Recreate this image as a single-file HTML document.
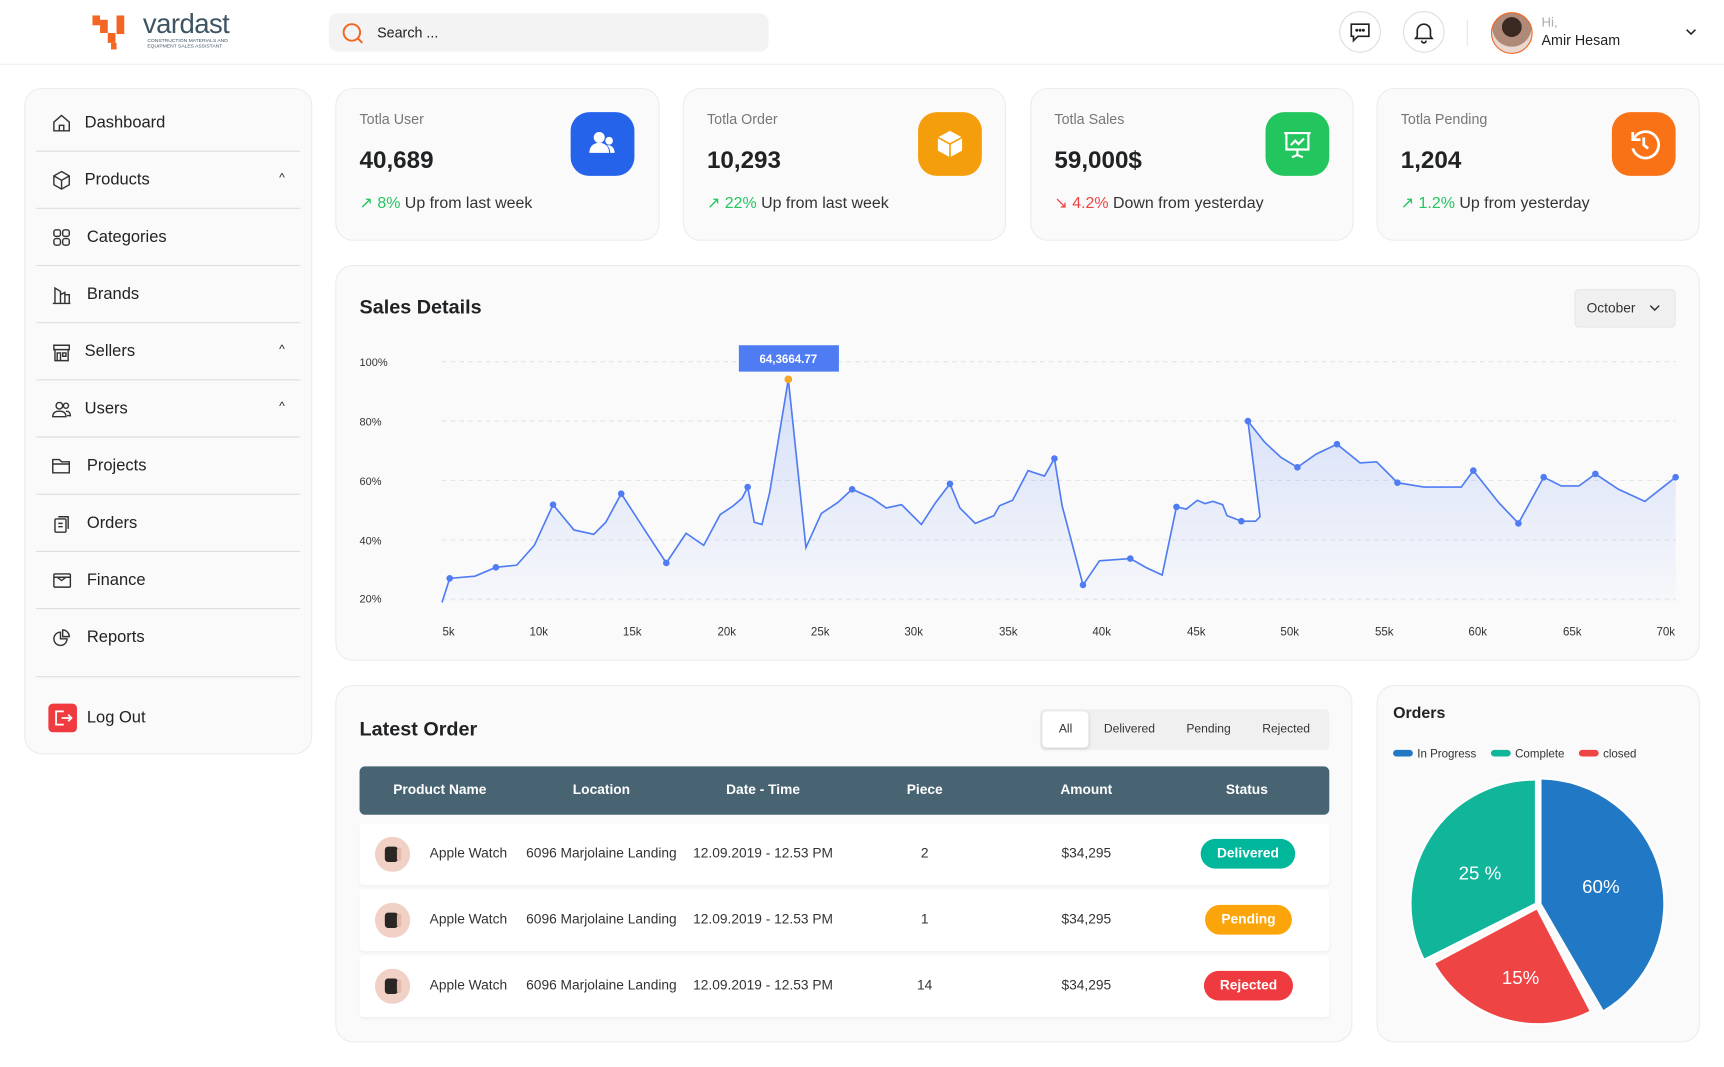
<!DOCTYPE html>
<html><head><meta charset="utf-8"><style>
*{box-sizing:border-box;margin:0;padding:0}
html,body{width:1724px;height:1067px;overflow:hidden;background:#fff}
#w{position:absolute;left:0;top:0;width:1568px;height:970px;transform:scale(1.0995);transform-origin:0 0;font-family:"Liberation Sans",Arial,sans-serif;color:#202224}
.a{position:absolute}
.card{position:absolute;background:#fafafa;border:1px solid #ececec;border-radius:16px}
.t{position:absolute;white-space:nowrap}
.nav{position:absolute;left:10px;width:240px;height:52px;border-bottom:1px solid #ddd}
.nav svg{position:absolute;left:14px;top:17px}
.nav span{position:absolute;left:44px;top:17px;font-size:15px;color:#222}
.nav i{position:absolute;right:14px;top:18px;font-style:normal;font-size:11px;color:#222}
.st .l{position:absolute;left:21px;top:20px;font-size:13px;color:#777}
.st .n{position:absolute;left:21px;top:52px;font-size:22px;font-weight:bold;color:#202224}
.st .tr{position:absolute;left:21px;top:96px;font-size:14.5px;color:#333;white-space:nowrap}
.st .ic{position:absolute;left:213px;top:21px;width:58px;height:58px;border-radius:17px}
.th{position:absolute;top:14px;font-size:12.5px;font-weight:bold;color:#fff;transform:translateX(-50%);white-space:nowrap}
.row{position:absolute;left:21px;width:882px;height:56px;background:#fff;border-radius:4px;box-shadow:0 1px 3px rgba(0,0,0,.05)}
.row .c{position:absolute;top:20px;font-size:12.5px;color:#333;transform:translateX(-50%);white-space:nowrap}
.b{position:absolute;top:14px;height:27px;border-radius:14px;color:#fff;font-size:12.5px;font-weight:bold;text-align:center;line-height:27px}
.w{position:absolute;left:14px;top:12px;width:32px;height:32px}
</style></head><body><div id="w">
<div class="a" style="left:0;top:58px;width:1568px;height:1px;background:#eee"></div>
<svg class="a" style="left:84px;top:14px" width="40" height="32"><rect x="0" y="0" width="7" height="9" fill="#f26522"/><rect x="7" y="4" width="7" height="12" fill="#f26522"/><rect x="14" y="16" width="7" height="9" fill="#f26522"/><rect x="17" y="25" width="5" height="6" fill="#f26522"/><rect x="22" y="0" width="7" height="17" fill="#f26522"/></svg>
<div class="t" style="left:130px;top:8px;font-size:25px;color:#3d5563;letter-spacing:-.5px">vardast</div>
<div class="t" style="left:134px;top:34px;font-size:4.5px;color:#3d5563;line-height:5px">CONSTRUCTION MATERIALS AND<br>EQUIPMENT SALES ASSISTANT</div>
<div class="a" style="left:299px;top:12px;width:400px;height:35px;background:#f3f3f3;border-radius:8px"></div>
<svg class="a" style="left:310px;top:20px" width="22" height="22" fill="none" stroke="#f26522" stroke-width="1.8"><circle cx="10" cy="9.5" r="7.5"/><path d="M15.5 15l4 4"/></svg>
<div class="t" style="left:343px;top:22px;font-size:13px;color:#222">Search ...</div>
<div class="a" style="left:1218px;top:10px;width:38px;height:38px;border:1px solid #ddd;border-radius:50%"></div>
<svg class="a" style="left:1226px;top:18px" width="22" height="22" fill="none" stroke="#222" stroke-width="1.5"><path d="M3 4h16v11H9l-4 4v-4H3z"/><circle cx="8" cy="9.5" r=".6" fill="#222"/><circle cx="11" cy="9.5" r=".6" fill="#222"/><circle cx="14" cy="9.5" r=".6" fill="#222"/></svg>
<div class="a" style="left:1276px;top:10px;width:38px;height:38px;border:1px solid #ddd;border-radius:50%"></div>
<svg class="a" style="left:1284px;top:18px" width="22" height="22" fill="none" stroke="#222" stroke-width="1.5"><path d="M5 15V10a6 6 0 0 1 12 0v5l1.5 2h-15z"/><path d="M9 19a2 2 0 0 0 4 0"/></svg>
<div class="a" style="left:1334px;top:18px;width:1px;height:24px;background:#e6e6e6"></div>
<div class="a" style="left:1356px;top:11px;width:38px;height:38px;border-radius:50%;background:radial-gradient(circle at 50% 35%,#3a2a22 0 30%,#b08a78 31% 60%,#e8d8d0 61%);border:1.5px solid #f26522"></div>
<div class="t" style="left:1402px;top:13px;font-size:12px;color:#aaa">Hi,</div>
<div class="t" style="left:1402px;top:29px;font-size:13px;color:#222">Amir Hesam</div>
<svg class="a" style="left:1532px;top:24px" width="12" height="10" fill="none" stroke="#222" stroke-width="1.4"><path d="M2 3l4 4 4-4"/></svg>

<div class="card" style="left:22px;top:80px;width:262px;height:606px">
<div class="nav" style="top:5px"><svg width="18" height="18" fill="none" stroke="#333" stroke-width="1.3"><path d="M2 8l7-6 7 6v8H2z"/><path d="M7 16v-5h4v5"/></svg><span>Dashboard</span></div>
<div class="nav" style="top:57px"><svg width="18" height="18" fill="none" stroke="#333" stroke-width="1.3"><path d="M9 1l7 4v8l-7 4-7-4V5z"/><path d="M2 5l7 4 7-4M9 9v8"/></svg><span>Products</span><i>^</i></div>
<div class="nav" style="top:109px"><svg width="18" height="18" fill="none" stroke="#333" stroke-width="1.3"><rect x="2" y="2" width="6" height="6" rx="2"/><rect x="10" y="2" width="6" height="6" rx="2"/><rect x="2" y="10" width="6" height="6" rx="2"/><rect x="10" y="10" width="6" height="6" rx="2"/></svg><span style="left:46px">Categories</span></div>
<div class="nav" style="top:161px"><svg width="18" height="18" fill="none" stroke="#333" stroke-width="1.3"><path d="M1 17h16M3 17V3l5 3v11M8 9l4-2v10M12 9h4v8"/></svg><span style="left:46px">Brands</span></div>
<div class="nav" style="top:213px"><svg width="18" height="18" fill="none" stroke="#333" stroke-width="1.3"><path d="M2 3h14v4H2zM3 7v10h12V7M5 10h3v7H5zM10 10h3v3h-3z"/></svg><span>Sellers</span><i>^</i></div>
<div class="nav" style="top:265px"><svg width="18" height="18" fill="none" stroke="#333" stroke-width="1.3"><circle cx="7" cy="6" r="3"/><circle cx="13" cy="6" r="2.3"/><path d="M1 16c0-4 3-5 6-5s6 1 6 5zM13 11c3 0 4 2 4 4h-3"/></svg><span>Users</span><i>^</i></div>
<div class="nav" style="top:317px"><svg width="18" height="18" fill="none" stroke="#333" stroke-width="1.3"><path d="M1 5V3h6l2 2h7v10H1zM1 7h15"/></svg><span style="left:46px">Projects</span></div>
<div class="nav" style="top:369px"><svg width="18" height="18" fill="none" stroke="#333" stroke-width="1.3"><rect x="3" y="5" width="10" height="12" rx="1"/><path d="M6 3h9v11M6 9h4M6 12h4"/></svg><span style="left:46px">Orders</span></div>
<div class="nav" style="top:421px"><svg width="18" height="18" fill="none" stroke="#333" stroke-width="1.3"><rect x="2" y="3" width="15" height="12" rx="1"/><path d="M2 6h15M5 6l4 3 4-3"/></svg><span style="left:46px">Finance</span></div>
<div class="nav" style="top:473px;height:62px"><svg width="18" height="18" fill="none" stroke="#333" stroke-width="1.3"><path d="M8 4a6 6 0 1 0 6 6H8z"/><path d="M10 2a6 6 0 0 1 6 6h-6z"/></svg><span style="left:46px">Reports</span></div>
<div class="a" style="left:21px;top:559px;width:26px;height:26px;background:#ef3b3f;border-radius:4px"></div>
<svg class="a" style="left:25px;top:563px" width="18" height="18" fill="none" stroke="#fff" stroke-width="1.6"><path d="M10 3H3v12h7M8 9h9M14 6l3 3-3 3"/></svg>
<div class="t" style="left:56px;top:563px;font-size:15px;color:#222">Log Out</div>
</div>

<div class="card st" style="left:305px;top:80px;width:295px;height:139px"><div class="l">Totla User</div><div class="n">40,689</div><div class="ic" style="background:#2563eb"><svg width="58" height="58" fill="#fff"><circle cx="26" cy="23" r="5"/><path d="M17 37c0-6 4-9 9-9s9 3 9 9z"/><circle cx="35" cy="26" r="3.5"/><path d="M33 30c4 0 7 2 7 7h-4c0-3-1-5-3-7z"/></svg></div><div class="tr"><span style="color:#22c55e">↗ 8%</span> Up from last week</div></div>
<div class="card st" style="left:621px;top:80px;width:294px;height:139px"><div class="l">Totla Order</div><div class="n">10,293</div><div class="ic" style="background:#f59e0b"><svg width="58" height="58"><path d="M29 17l11 6v12l-11 6-11-6V23z" fill="#fff"/><path d="M18 23l11 6 11-6M29 29v12" stroke="#f59e0b" stroke-width="1.5" fill="none"/></svg></div><div class="tr"><span style="color:#22c55e">↗ 22%</span> Up from last week</div></div>
<div class="card st" style="left:937px;top:80px;width:294px;height:139px"><div class="l">Totla Sales</div><div class="n">59,000$</div><div class="ic" style="background:#22c55e"><svg width="58" height="58" fill="none" stroke="#fff" stroke-width="2"><path d="M17 19h24M19 19v15h20V19M29 34v5M24 41l5-2 5 2"/><path d="M23 30l4-4 3 3 5-5" /></svg></div><div class="tr"><span style="color:#ef4444">↘ 4.2%</span> Down from yesterday</div></div>
<div class="card st" style="left:1252px;top:80px;width:294px;height:139px"><div class="l">Totla Pending</div><div class="n">1,204</div><div class="ic" style="background:#f97316"><svg width="58" height="58" fill="none" stroke="#fff" stroke-width="2.5"><path d="M20 24a12 12 0 1 1-1 9"/><path d="M19 18v7h7M29 23v7l4 3"/></svg></div><div class="tr"><span style="color:#22c55e">↗ 1.2%</span> Up from yesterday</div></div>

<div class="card" style="left:305px;top:241px;width:1241px;height:360px"></div>
<div class="t" style="left:327px;top:269px;font-size:18px;font-weight:bold;color:#202224">Sales Details</div>
<div class="a" style="left:1432px;top:263px;width:92px;height:35px;background:#f0f0f0;border:1px solid #e6e6e6;border-radius:4px"></div>
<div class="t" style="left:1443px;top:273px;font-size:12.5px;color:#333">October</div>
<svg class="a" style="left:1500px;top:276px" width="10" height="8" fill="none" stroke="#333" stroke-width="1.3"><path d="M1 2l4 4 4-4"/></svg>
<svg class="a" style="left:0;top:0" width="1568" height="970" font-family="Liberation Sans,Arial,sans-serif">
<defs><linearGradient id="g" x1="0" y1="0" x2="0" y2="1"><stop offset="0" stop-color="#4f7cf3" stop-opacity=".22"/><stop offset="1" stop-color="#4f7cf3" stop-opacity=".02"/></linearGradient></defs>
<g stroke="#e4e4e4" stroke-dasharray="4 4"><path d="M402 329H1524M402 383H1524M402 437H1524M402 491H1524M402 545H1524"/></g>
<g font-size="10" fill="#333"><text x="327" y="333">100%</text><text x="327" y="387">80%</text><text x="327" y="441">60%</text><text x="327" y="495">40%</text><text x="327" y="548">20%</text></g>
<g font-size="10.5" fill="#333" text-anchor="middle"><text x="408" y="578">5k</text><text x="490" y="578">10k</text><text x="575" y="578">15k</text><text x="661" y="578">20k</text><text x="746" y="578">25k</text><text x="831" y="578">30k</text><text x="917" y="578">35k</text><text x="1002" y="578">40k</text><text x="1088" y="578">45k</text><text x="1173" y="578">50k</text><text x="1259" y="578">55k</text><text x="1344" y="578">60k</text><text x="1430" y="578">65k</text><text x="1515" y="578">70k</text></g>
<path d="M402,548 409,526 432,524 451,516 470,514 486,496 503,459 522,482 540,486 551,475 565,449 587,483 606,512 624,485 640,496 655,468 667,460 675,453 680,443 686,475 693,477 700,448 717,345 733,498 747,467 762,457 775,445 793,453 806,462 820,459 838,477 851,457 864,440 873,462 887,476 904,469 909,460 921,455 935,428 950,433 959,417 966,460 985,532 1000,510 1028,508 1042,516 1057,523 1070,461 1079,463 1089,455 1096,458 1103,456 1112,459 1116,469 1129,474 1142,474 1146,470 1135,383 1150,402 1165,416 1180,425 1197,413 1216,404 1237,421 1252,420 1271,439 1295,443 1329,443 1340,428 1363,457 1381,476 1404,434 1420,442 1436,442 1451,431 1472,445 1496,456 1524,434 V548 H402Z" fill="url(#g)"/>
<polyline fill="none" stroke="#4f7cf3" stroke-width="1.5" points="402,548 409,526 432,524 451,516 470,514 486,496 503,459 522,482 540,486 551,475 565,449 587,483 606,512 624,485 640,496 655,468 667,460 675,453 680,443 686,475 693,477 700,448 717,345 733,498 747,467 762,457 775,445 793,453 806,462 820,459 838,477 851,457 864,440 873,462 887,476 904,469 909,460 921,455 935,428 950,433 959,417 966,460 985,532 1000,510 1028,508 1042,516 1057,523 1070,461 1079,463 1089,455 1096,458 1103,456 1112,459 1116,469 1129,474 1142,474 1146,470 1135,383 1150,402 1165,416 1180,425 1197,413 1216,404 1237,421 1252,420 1271,439 1295,443 1329,443 1340,428 1363,457 1381,476 1404,434 1420,442 1436,442 1451,431 1472,445 1496,456 1524,434"/>
<g fill="#4f7cf3"><circle cx="409" cy="526" r="3"/><circle cx="451" cy="516" r="3"/><circle cx="503" cy="459" r="3"/><circle cx="565" cy="449" r="3"/><circle cx="606" cy="512" r="3"/><circle cx="680" cy="443" r="3"/><circle cx="775" cy="445" r="3"/><circle cx="864" cy="440" r="3"/><circle cx="959" cy="417" r="3"/><circle cx="985" cy="532" r="3"/><circle cx="1028" cy="508" r="3"/><circle cx="1070" cy="461" r="3"/><circle cx="1129" cy="474" r="3"/><circle cx="1135" cy="383" r="3"/><circle cx="1180" cy="425" r="3"/><circle cx="1216" cy="404" r="3"/><circle cx="1271" cy="439" r="3"/><circle cx="1340" cy="428" r="3"/><circle cx="1381" cy="476" r="3"/><circle cx="1404" cy="434" r="3"/><circle cx="1451" cy="431" r="3"/><circle cx="1524" cy="434" r="3"/></g>
<circle cx="717" cy="345" r="3.5" fill="#f5a623"/>
<rect x="672" y="314" width="91" height="24" fill="#4f7cf3"/>
<text x="717" y="330" font-size="10.5" font-weight="bold" fill="#fff" text-anchor="middle">64,3664.77</text>
</svg>

<div class="card" style="left:305px;top:623px;width:925px;height:325px">
<div class="t" style="left:21px;top:29px;font-size:18px;font-weight:bold;color:#202224">Latest Order</div>
<div class="a" style="left:640px;top:21px;width:263px;height:37px;background:#f0f0f0;border-radius:4px"></div>
<div class="a" style="left:642px;top:23px;width:42px;height:33px;background:#fff;border-radius:4px;box-shadow:0 1px 3px rgba(0,0,0,.15)"></div>
<div class="t" style="left:657px;top:33px;font-size:11px;color:#333">All</div>
<div class="t" style="left:698px;top:33px;font-size:11px;color:#333">Delivered</div>
<div class="t" style="left:773px;top:33px;font-size:11px;color:#333">Pending</div>
<div class="t" style="left:842px;top:33px;font-size:11px;color:#333">Rejected</div>
<div class="a" style="left:21px;top:73px;width:882px;height:44px;background:#486473;border-radius:5px">
<div class="th" style="left:73px">Product Name</div><div class="th" style="left:220px">Location</div><div class="th" style="left:367px">Date - Time</div><div class="th" style="left:514px">Piece</div><div class="th" style="left:661px">Amount</div><div class="th" style="left:807px">Status</div></div>
<div class="row" style="top:125px"><svg class="w"><circle cx="16" cy="16" r="16" fill="#f1d0c6"/><rect x="9" y="9" width="12" height="14" rx="3" fill="#2a2624"/><rect x="20" y="10" width="4" height="12" rx="2" fill="#e8b8aa"/></svg><div class="c" style="left:99px">Apple Watch</div><div class="c" style="left:220px">6096 Marjolaine Landing</div><div class="c" style="left:367px">12.09.2019 - 12.53 PM</div><div class="c" style="left:514px">2</div><div class="c" style="left:661px">$34,295</div><div class="b" style="left:765px;width:86px;background:#00b69b">Delivered</div></div>
<div class="row" style="top:185px"><svg class="w"><circle cx="16" cy="16" r="16" fill="#f1d0c6"/><rect x="9" y="9" width="12" height="14" rx="3" fill="#2a2624"/><rect x="20" y="10" width="4" height="12" rx="2" fill="#e8b8aa"/></svg><div class="c" style="left:99px">Apple Watch</div><div class="c" style="left:220px">6096 Marjolaine Landing</div><div class="c" style="left:367px">12.09.2019 - 12.53 PM</div><div class="c" style="left:514px">1</div><div class="c" style="left:661px">$34,295</div><div class="b" style="left:769px;width:79px;background:#fca50a">Pending</div></div>
<div class="row" style="top:245px"><svg class="w"><circle cx="16" cy="16" r="16" fill="#f1d0c6"/><rect x="9" y="9" width="12" height="14" rx="3" fill="#2a2624"/><rect x="20" y="10" width="4" height="12" rx="2" fill="#e8b8aa"/></svg><div class="c" style="left:99px">Apple Watch</div><div class="c" style="left:220px">6096 Marjolaine Landing</div><div class="c" style="left:367px">12.09.2019 - 12.53 PM</div><div class="c" style="left:514px">14</div><div class="c" style="left:661px">$34,295</div><div class="b" style="left:768px;width:81px;background:#ef3b3f">Rejected</div></div>
</div>

<div class="card" style="left:1252px;top:623px;width:294px;height:325px"></div>
<div class="t" style="left:1267px;top:641px;font-size:14.5px;font-weight:bold;color:#202224">Orders</div>
<svg class="a" style="left:0;top:0" width="1568" height="970" font-family="Liberation Sans,Arial,sans-serif">
<rect x="1267" y="682" width="18" height="6" rx="3" fill="#2178c4"/><text x="1289" y="689" font-size="10.5" fill="#333">In Progress</text>
<rect x="1356" y="682" width="18" height="6" rx="3" fill="#10b59a"/><text x="1378" y="689" font-size="10.5" fill="#333">Complete</text>
<rect x="1436" y="682" width="18" height="6" rx="3" fill="#ef4444"/><text x="1458" y="689" font-size="10.5" fill="#333">closed</text>
<path d="M1401,822 L1401,708 A114,114 0 0 1 1458,920 Z" fill="#2178c4" stroke="#fff" stroke-width="2"/>
<path d="M1398,826 L1447,920 A108,108 0 0 1 1304,876 Z" fill="#ef4444" stroke="#fff" stroke-width="2"/>
<path d="M1397,822 L1295,873 A113,113 0 0 1 1397,709 Z" fill="#10b59a" stroke="#fff" stroke-width="2"/>
<text x="1456" y="812" font-size="17" fill="#fff" text-anchor="middle">60%</text>
<text x="1346" y="800" font-size="17" fill="#fff" text-anchor="middle">25 %</text>
<text x="1383" y="895" font-size="17" fill="#fff" text-anchor="middle">15%</text>
</svg>
</div></body></html>
